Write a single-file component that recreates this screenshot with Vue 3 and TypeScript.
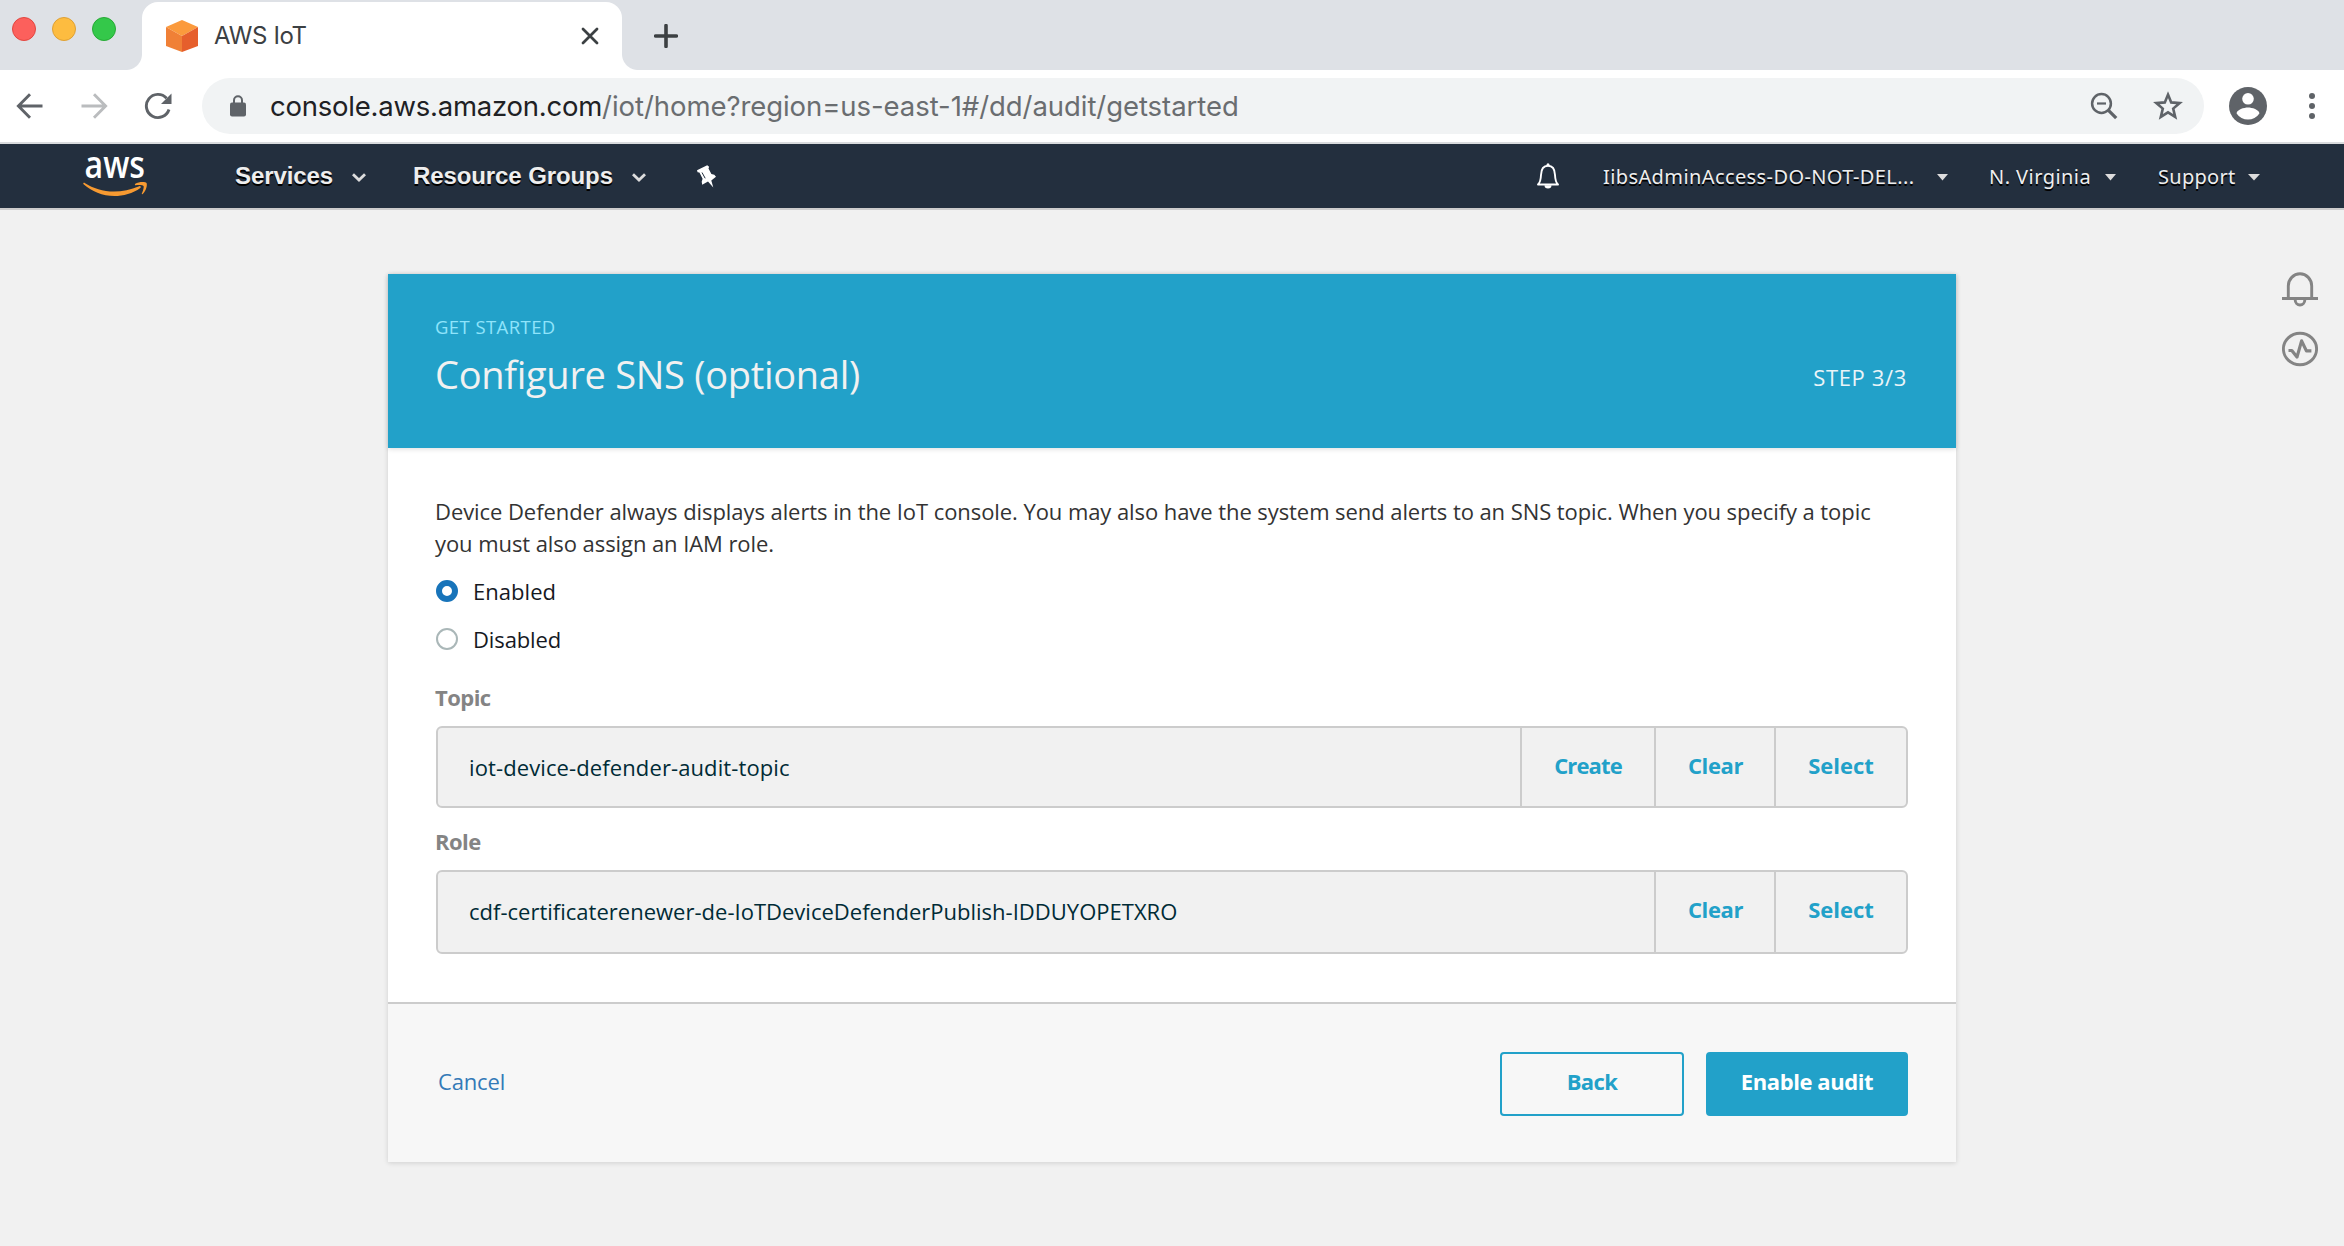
<script setup lang="ts">
import { ref } from 'vue'

interface Action {
  name: string
  tone: string
}
interface Field {
  label: string
  value: string
  actions: Action[]
  kind: string
}

const create: Action = { name: 'Create', tone: 'create' }
const clear: Action = { name: 'Clear', tone: 'clear' }
const select: Action = { name: 'Select', tone: 'select' }

const fields: Field[] = [
  { label: 'Topic', value: 'iot-device-defender-audit-topic', actions: [create, clear, select], kind: 'topic' },
  {
    label: 'Role',
    value: 'cdf-certificaterenewer-de-IoTDeviceDefenderPublish-IDDUYOPETXRO',
    actions: [clear, select],
    kind: 'role',
  },
]

type Choice = 'Enabled' | 'Disabled'
const choices: Choice[] = ['Enabled', 'Disabled']
const sns = ref<Choice>('Enabled')
</script>

<template>
  <div class="screen">
    <div class="tabstrip">
      <div class="lights">
        <span class="light red"></span>
        <span class="light yellow"></span>
        <span class="light green"></span>
      </div>
      <div class="tab">
        <svg class="favicon" width="32" height="32" viewBox="0 0 32 32">
          <path d="M16 0 32 7 16 16 0 7z" fill="#fb9a3c" />
          <path d="M0 7l16 9v16L0 26z" fill="#f08036" />
          <path d="M32 7l-16 9v16l16-6z" fill="#e65f2c" />
        </svg>
        <span class="tab-title">AWS IoT</span>
        <svg class="tab-close" width="18" height="18" viewBox="0 0 18 18">
          <path d="M2 2l14 14M16 2L2 16" stroke="#3c4043" stroke-width="2.8" fill="none" stroke-linecap="round" />
        </svg>
      </div>
      <svg class="new-tab" width="24" height="24" viewBox="0 0 24 24">
        <path d="M12 1.6v20.8M1.6 12h20.8" stroke="#3c4043" stroke-width="3.6" stroke-linecap="round" />
      </svg>
    </div>

    <div class="toolbar">
      <svg class="back-arrow" width="28" height="28" viewBox="0 0 28 28">
        <path d="M26.5 14H3M14 2.3L2.4 14 14 25.7" stroke="#5f6368" stroke-width="2.9" fill="none" />
      </svg>
      <svg class="fwd-arrow" width="28" height="28" viewBox="0 0 28 28">
        <path d="M1.5 14H25M14 2.3L25.6 14 14 25.7" stroke="#babcbe" stroke-width="2.9" fill="none" />
      </svg>
      <svg class="reload" width="28" height="28" viewBox="0 0 28 28">
        <path d="M25 17.5A11.6 11.6 0 1 1 22.6 6.2" stroke="#5f6368" stroke-width="2.9" fill="none" />
        <path d="M27.5 1.5V12H17z" fill="#5f6368" />
      </svg>
      <div class="omnibox">
        <svg class="lock" width="16" height="22" viewBox="0 0 16 22">
          <path d="M4 9V5.2a4 4 0 0 1 8 0V9" stroke="#5f6368" stroke-width="2" fill="none" />
          <rect y="7.6" width="16" height="14" rx="2" fill="#5f6368" />
        </svg>
        <span class="url"><span class="domain">console.aws.amazon.com</span>/iot/home?region=us-east-1#/dd/audit/getstarted</span>
        <svg class="zoom-out" width="28" height="28" viewBox="0 0 28 28">
          <circle cx="11.5" cy="11.5" r="9.4" stroke="#5f6368" stroke-width="2.5" fill="none" />
          <path d="M7 11.5h9" stroke="#5f6368" stroke-width="2.2" />
          <path d="M18.2 18.2l8 8" stroke="#5f6368" stroke-width="3.3" />
        </svg>
        <svg class="star" width="30" height="30" viewBox="0 0 30 30">
          <path d="M15 3.6l3.2 7.8 8.5.7-6.5 5.5 2 8.3-7.2-4.5-7.2 4.5 2-8.3-6.5-5.5 8.5-.7z" stroke="#5f6368" stroke-width="2.6" fill="none" />
        </svg>
      </div>
      <svg class="profile" width="38" height="38" viewBox="0 0 38 38">
        <circle cx="19" cy="19" r="19" fill="#5f6368" />
        <circle cx="19" cy="11.8" r="5.8" fill="#fff" />
        <path d="M7.6 26.5c0-3.9 7.6-6 11.4-6s11.4 2.1 11.4 6a13.7 13.7 0 0 1-22.8 0z" fill="#fff" />
      </svg>
      <svg class="kebab" width="6" height="28" viewBox="0 0 6 28">
        <circle cx="3" cy="4" r="3" fill="#5f6368" />
        <circle cx="3" cy="14" r="3" fill="#5f6368" />
        <circle cx="3" cy="24" r="3" fill="#5f6368" />
      </svg>
    </div>

    <nav class="awsnav">
      <svg class="aws-logo" width="65" height="40" viewBox="0 0 65 40">
        <text x="1.5" y="20" textLength="60.5" lengthAdjust="spacingAndGlyphs" class="aws-word">aws</text>
        <path d="M.3 25.2c.4-.7 1-.5 1.8 0C10 30.2 20 33.5 31 33.5c8 0 17-1.8 25.2-5.3 1.3-.5 2.3.8 1.1 1.8C50 35.5 40 38 31.5 38 19.5 38 8.5 33.5.6 26.3c-.3-.4-.5-.7-.3-1.100z" fill="#f79a31" />
        <path d="M52 26.8c-.3-.3-.2-.8.3-1.1 3-2 10-2.3 11.2-.8 1.1 1.6-.4 8-3.8 11.1-.6.5-1.1.2-.9-.4.9-2.1 2.5-6.6 1.7-7.7-.9-1.2-5.700-.9-8-.6-.3 0-.5-.1-.5-.5z" fill="#f79a31" />
      </svg>
      <div class="menu services">
        <span>Services</span>
        <svg width="14" height="9" viewBox="0 0 14 9"><path d="M1 1.2L7 7l6-5.8" stroke="#ddd" stroke-width="2.8" fill="none" /></svg>
      </div>
      <div class="menu groups">
        <span>Resource Groups</span>
        <svg width="14" height="9" viewBox="0 0 14 9"><path d="M1 1.2L7 7l6-5.8" stroke="#ddd" stroke-width="2.8" fill="none" /></svg>
      </div>
      <svg class="pin" width="20" height="23" viewBox="0 0 20 23">
        <path d="M10.2.3 0 5.3l.6 1.9 1.8.4 3.2 6.2-.9 3 .5 2.9 5.8-3.3 5.3 6-2-7 4.7-3.7-1.7-2-2.9-.8-2.9-5.500.6-1.700z" fill="#fff" />
        <path d="M5 7.5l3.2 5.8" stroke="#232f3e" stroke-width="1" />
      </svg>

      <svg class="nav-bell" width="24" height="26" viewBox="0 0 24 26">
        <path d="M2 21.5C4.5 19.2 4.8 16.5 5 12 5.2 6 7.5 2.8 12 2.8S18.8 6 19 12c.2 4.5.5 7.2 3 9.5z" stroke="#fff" stroke-width="1.9" fill="none" stroke-linejoin="round" />
        <circle cx="12" cy="1.8" r="1.5" fill="#fff" />
        <path d="M8.5 22.3h7a3.5 3.2 0 0 1-7 0z" fill="#fff" />
      </svg>
      <div class="menu small account">
        <span>IibsAdminAccess-DO-NOT-DEL...</span>
        <svg width="11" height="7" viewBox="0 0 11 7"><path d="M0 0h11L5.500 6.500z" fill="#ddd" /></svg>
      </div>
      <div class="menu small region">
        <span>N. Virginia</span>
        <svg width="11" height="7" viewBox="0 0 11 7"><path d="M0 0h11L5.500 6.500z" fill="#ddd" /></svg>
      </div>
      <div class="menu small support">
        <span>Support</span>
        <svg width="12" height="7" viewBox="0 0 12 7"><path d="M0 0h12L6 6.500z" fill="#ddd" /></svg>
      </div>
    </nav>

    <main class="page">
      <section class="card">
        <header class="card-head">
          <div>
            <div class="eyebrow">GET STARTED</div>
            <h1>Configure SNS (optional)</h1>
          </div>
          <div class="step">STEP 3/3</div>
        </header>

        <div class="card-body">
          <p>
            Device Defender always displays alerts in the IoT console. You may also have the system send alerts to an SNS topic. When you specify a topic<br />you must also assign an IAM role.
          </p>

          <div class="choices">
            <label v-for="c in choices" :key="c" class="choice" @click="sns = c">
              <span class="radio" :class="{ on: sns === c }"></span>
              <span :class="c.toLowerCase()">{{ c }}</span>
            </label>
          </div>

          <div v-for="f in fields" :key="f.label" class="field" :class="f.kind">
            <div class="label">{{ f.label }}</div>
            <div class="box">
              <div class="value">{{ f.value }}</div>
              <div v-for="a in f.actions" :key="a.name" class="action" :class="a.tone">{{ a.name }}</div>
            </div>
          </div>
        </div>

        <footer class="card-foot">
          <a class="cancel">Cancel</a>
          <div class="btn outline">Back</div>
          <div class="btn solid">Enable audit</div>
        </footer>
      </section>

      <aside class="rail">
        <svg width="36" height="36" viewBox="0 0 36 36">
          <path d="M6.3 26.5V14a11.7 12.2 0 0 1 23.4 0v12.5" stroke="#848484" stroke-width="2.9" fill="none" />
          <path d="M0 26.5h36" stroke="#848484" stroke-width="3" />
          <path d="M13.2 28a4.8 5 0 0 0 9.6 0" stroke="#848484" stroke-width="2.9" fill="none" />
        </svg>
        <svg width="36" height="36" viewBox="0 0 36 36">
          <ellipse cx="18" cy="18" rx="16.6" ry="15.8" stroke="#848484" stroke-width="2.9" fill="none" />
          <path d="M6.5 19.5h3.3l5.2 6.6 4.6-16.2 4.8 10h5" stroke="#848484" stroke-width="3.2" fill="none" stroke-linejoin="round" />
        </svg>
      </aside>
    </main>
  </div>
</template>

<style>
body {
  margin: 0;
  background: #f1f1f1;
}
</style>

<style scoped>
.screen {
  width: 2344px;
  height: 1246px;
  overflow: hidden;
  background: #f1f1f1;
  font-family: "Open Sans", sans-serif;
  display: flex;
  flex-direction: column;
}
svg {
  display: block;
  flex: none;
}

/* tab strip */
.tabstrip {
  height: 70px;
  flex: none;
  background: #dee1e6;
  display: flex;
  align-items: flex-start;
}
.lights {
  display: flex;
  gap: 16px;
  padding: 17px 0 0 12px;
}
.light {
  width: 24px;
  height: 24px;
  border-radius: 50%;
  box-sizing: border-box;
}
.red { background: #fc605c; border: 1px solid #e2463f; }
.yellow { background: #fdbc40; border: 1px solid #dea034; }
.green { background: #34c84a; border: 1px solid #27aa35; }
.tab {
  position: relative;
  width: 480px;
  height: 68px;
  margin: 2px 0 0 26px;
  background: #fff;
  border-radius: 16px 16px 0 0;
  box-sizing: border-box;
  padding: 0 23px 0 24px;
  display: flex;
  align-items: center;
}
.tab::before,
.tab::after {
  content: "";
  position: absolute;
  bottom: 0;
  width: 16px;
  height: 16px;
}
.tab::before {
  left: -16px;
  background: radial-gradient(circle at 0 0, transparent 15.5px, #fff 16.5px);
}
.tab::after {
  right: -16px;
  background: radial-gradient(circle at 100% 0, transparent 15.5px, #fff 16.5px);
}
.tab-title {
  flex: 1;
  margin-left: 16px;
  font: 24px/30px Inter, sans-serif;
  letter-spacing: -0.4px;
  color: #3c4043;
}
.new-tab {
  margin: 24px 0 0 32px;
}

/* toolbar */
.toolbar {
  height: 72px;
  flex: none;
  background: #fff;
  border-bottom: 2px solid #d9dbdd;
  display: flex;
  align-items: center;
}
.back-arrow { margin-left: 16px; }
.fwd-arrow { margin-left: 36px; }
.reload { margin-left: 36px; }
.omnibox {
  width: 2002px;
  height: 56px;
  margin-left: 30px;
  border-radius: 28px;
  background: #f1f3f4;
  box-sizing: border-box;
  padding: 0 21px 0 28px;
  display: flex;
  align-items: center;
}
.url {
  flex: 1;
  margin-left: 24px;
  font: 27.5px/40px Inter, sans-serif;
  letter-spacing: -0.06px;
  color: #6a6d70;
  white-space: nowrap;
}
.domain {
  color: #202124;
  letter-spacing: -0.23px;
}
.zoom-out { margin-right: 35px; }
.profile { margin-left: 25px; }
.kebab { margin-left: 42px; }

/* AWS navigation */
.awsnav {
  height: 64px;
  flex: none;
  background: #232f3e;
  border-bottom: 2px solid #ccc;
  display: flex;
  align-items: center;
  color: #eee;
}
.aws-logo {
  margin: 4px 0 0 83px;
  overflow: visible;
}
.aws-word {
  font-family: "Open Sans", sans-serif;
  font-size: 37px;
  font-weight: 600;
  fill: #fff;
}
.menu {
  display: flex;
  align-items: center;
  white-space: nowrap;
  font: bold 24px/32px "Liberation Sans", Arial, sans-serif;
  letter-spacing: -0.1px;
  text-shadow: 0 2px 0 #000;
}
.menu.services { margin-left: 87px; }
.services span { width: 117px; }
.menu.groups { margin-left: 47px; }
.groups span { width: 219px; }
.menu svg { margin-top: 3px; }
.pin { margin-left: 51px; }
.nav-bell { margin-left: 819px; }
.menu.small {
  font: 20px/32px "Noto Sans", sans-serif;
  padding-top: 2px;
}
.menu.small svg { margin-top: 0; }
.menu.account { margin-left: 43px; letter-spacing: 0.4px; }
.account span { width: 334px; }
.menu.region { margin-left: 41px; letter-spacing: 0.45px; }
.region span { width: 116px; }
.menu.support { margin-left: 42px; letter-spacing: 0.27px; }
.support span { width: 90px; }

/* page */
.page {
  flex: 1;
  display: flex;
  align-items: flex-start;
}
.card {
  width: 1568px;
  margin: 64px 0 0 388px;
  background: #fff;
  box-shadow: 0 1px 5px rgba(0, 0, 0, 0.14);
}
.card-head {
  height: 174px;
  box-sizing: border-box;
  padding: 41px 49px 0 47px;
  background: #22a1c9;
  box-shadow: 0 1px 5px rgba(0, 0, 0, 0.14);
  display: flex;
  justify-content: space-between;
  align-items: flex-start;
}
.eyebrow {
  font-size: 18.5px;
  line-height: 24px;
  letter-spacing: 0.42px;
  color: #8fe4fb;
}
h1 {
  margin: 11px 0 0;
  font-size: 38px;
  line-height: 48px;
  font-weight: 400;
  letter-spacing: -0.29px;
  color: #f1f1f1;
}
.step {
  margin-top: 46px;
  font-size: 22px;
  line-height: 32px;
  letter-spacing: 0.65px;
  color: #eaf4f8;
}
.card-body {
  padding: 47px 48px 48px;
  font-size: 22px;
  line-height: 32px;
}
p {
  margin: 0 0 8px -1px;
  letter-spacing: -0.072px;
  color: #333;
  white-space: nowrap;
}
.choice {
  height: 48px;
  display: flex;
  align-items: center;
  color: #16191f;
}
.radio {
  width: 22px;
  height: 22px;
  margin-right: 15px;
  box-sizing: border-box;
  border: 2px solid #aab7b8;
  border-radius: 50%;
  background: #fff;
}
.radio.on {
  border: 6.5px solid #1874ba;
}
.enabled { letter-spacing: 0.04px; }
.disabled { letter-spacing: -0.12px; }
.field { margin-top: 18px; }
.field.role { margin-top: 17px; }
.label {
  margin: 0 0 13px -1px;
  font-weight: 700;
  letter-spacing: -0.55px;
  color: #848484;
}
.box {
  height: 82px;
  box-sizing: border-box;
  border: 2px solid #ccc;
  border-radius: 6px;
  background: #f1f1f1;
  display: flex;
}
.role .box { height: 84px; }
.value {
  flex: 1;
  padding-left: 31px;
  display: flex;
  align-items: center;
  letter-spacing: 0.11px;
  color: #002b36;
}
.role .value {
  padding-bottom: 2px;
  letter-spacing: 0.01px;
}
.action {
  box-sizing: border-box;
  border-left: 2px solid #ccc;
  padding-bottom: 4px;
  display: flex;
  align-items: center;
  justify-content: center;
  font-weight: 700;
  color: #22a1c9;
}
.role .action { padding-bottom: 6px; }
.action.create { width: 134px; letter-spacing: -0.85px; }
.action.clear { width: 120px; padding-left: 1px; letter-spacing: -0.4px; }
.action.select { width: 132px; }
.card-foot {
  height: 160px;
  box-sizing: border-box;
  border-top: 2px solid #ccc;
  background: #f7f7f7;
  padding: 48px 48px 46px 50px;
  display: flex;
  font-size: 22px;
  line-height: 32px;
}
.cancel {
  flex: 1;
  align-self: center;
  padding-bottom: 6px;
  letter-spacing: -0.15px;
  color: #337ab7;
}
.btn {
  height: 64px;
  box-sizing: border-box;
  border: 2px solid #22a1c9;
  border-radius: 4px;
  padding-bottom: 6px;
  display: flex;
  align-items: center;
  justify-content: center;
  font-weight: 700;
}
.outline { width: 184px; color: #22a1c9; letter-spacing: -0.6px; }
.solid { width: 202px; margin-left: 22px; background: #22a1c9; color: #fff; letter-spacing: -0.42px; }

.rail {
  margin: 62px 0 0 326px;
  display: flex;
  flex-direction: column;
  gap: 23px;
}
</style>
